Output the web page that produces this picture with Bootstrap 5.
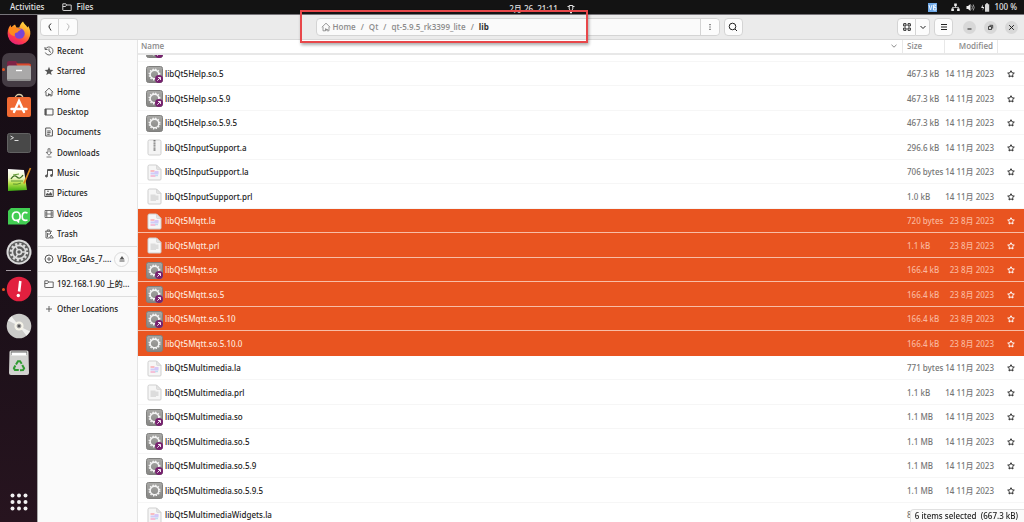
<!DOCTYPE html>
<html lang="en">
<head>
<meta charset="utf-8">
<meta name="viewport" content="width=device-width, initial-scale=1">
<title>Files</title>
<link href="https://cdn.jsdelivr.net/npm/bootstrap@5.3.0/dist/css/bootstrap.min.css" rel="stylesheet">
<style>
:root{--ink:#222;--accent:#e95420;--line:#d9d9d9}
body{font:500 8px/12px "Noto Sans","Noto Sans CJK SC",sans-serif;color:var(--ink);background:#fff}
svg{display:block;flex:none}
button{color:inherit;font:inherit}
a{color:inherit;text-decoration:none}
.defs{position:absolute;width:0;height:0}
.fill-rest{flex:1 1 0;min-width:0;min-height:0}
.i10{width:10px;height:10px}
.stroked{fill:none;stroke:currentColor;stroke-width:1}
/* top panel */
.panel{height:15px;background:#131313;color:#e4e4e4;border-bottom:1px solid #77757a}
.panel .side{flex:1 1 0}
.panel .activities{margin:0 18px 0 10px}
.panel .tray{gap:6px;padding-right:7px}
.panel .clock{padding:3px 0 0 68px}
/* dock */
.dock{width:38px;background:linear-gradient(#150c14,#1c1019 60%,#27141f);border-right:1px solid #aaa}
.dock li{height:36px}
.dock li:nth-child(even){height:37px}
.dock li.ruled{height:38px}
.dock li.ruled::before{content:"";position:absolute;top:0;left:6px;right:6px;height:1px;background:#a49aa2}
.dock a{width:34px;height:34px;border-radius:7px}
.dock a.current{background:#453c44}
.dock svg{width:26px;height:26px}
.dock .running{left:2px;width:3px;height:3px;border-radius:50%;background:var(--accent)}
.dock .apps{height:40px}
/* header bar */
.headbar{height:25px;background:#ebebeb;border-bottom:1px solid var(--line);padding:0 6px 0 2px}
.tool{height:18px;width:19px;padding:0;border:1px solid #d4d4d4;border-radius:4px;background:#fcfcfc;display:flex;align-items:center;justify-content:center}
.tool.thin{width:14px}
.tool.first{border-radius:4px 0 0 4px}
.tool.last{border-radius:0 4px 4px 0;border-left:0}
.tool.off{color:#b8b8b8}
.grow-a{flex:20 1 0}
.grow-b{flex:13 1 0}
.pathbar{height:18px;flex:0 1 404px;gap:5px;border:1px solid #d4d4d4;border-radius:4px;background:#fafafa;color:#8c8c8c;font-family:"Open Sans",sans-serif;font-weight:600}
.pathbar .tool{border-width:0 0 0 1px;height:16px;color:var(--ink);border-radius:0 4px 4px 0}
.pathbar .here{color:#2b2b2b;font-weight:700}
.pathbar .root{gap:2px}
.marker{left:-17px;top:-9px;width:288px;height:33px;z-index:5;border:2px solid #e8474a;box-shadow:1px 2px 3px #0005;pointer-events:none}
.window-keys{gap:8px;margin-left:10px}
.round{width:13px;height:13px;border:0;padding:0;border-radius:50%;background:#d8d8d8;display:flex;align-items:center;justify-content:center}
/* sidebar */
.places{width:100px;background:#fafafa;border-right:1px solid #e4e4e4;padding-top:1px}
.places ul{padding-bottom:2px}
.places li{height:20px}
.places li:nth-child(3n){height:21px}
.places .mount{height:25px;border-top:1px solid #dedede}
.places a{padding-left:6px;gap:3px;height:100%;white-space:nowrap}
.places svg{color:#555}
.eject{width:15px;height:15px;border:1px solid #dcdcdc;border-radius:50%;background:#fafafa;padding:0}
/* file list */
.files{width:100%;table-layout:fixed;border-collapse:separate;border-spacing:0}
.files th{position:sticky;top:0;z-index:1;height:15px;line-height:12px;padding:0 4px 1px;background:#fff;color:#8c8c8c;font-family:"Open Sans",sans-serif;font-weight:600;border-bottom:2px solid #e8e8e8;border-right:1px solid #e8e8e8}
.files th:first-child{padding-left:3px}
.files th:last-child{border-right:0}
.files td{padding:1px 4px 0;height:25px;line-height:12px;border-bottom:1px solid #f6f6f6;color:#757575;white-space:nowrap}
.files tr:nth-child(even) td{height:24px}
.files td:first-child{color:var(--ink);padding-left:8px}
.files td:last-child{color:#2e2e2e}
.files td.dt{padding-left:0}
.files tr.picked td{background:var(--accent);color:#f9b79d;border-bottom-color:#f8bda6}
.files tr.picked td:first-child{color:#fde6dc}
.files tr.picked td:last-child{color:#fff}
.files tr.lastpicked td{border-bottom-color:var(--accent)}
.files .entry{gap:2px}
.files svg.kind{width:17px;height:17px}
.c-size{width:42px}.c-date{width:53px}.c-star{width:26px}
.count{right:0;bottom:0;z-index:2;height:13px;padding:0 6px 0 4px;background:#fafafa;border:1px solid #e0e0e0;border-width:1px 0 0 1px;border-radius:4px 0 0 0}
</style>
</head>
<body class="vh-100 overflow-hidden d-flex flex-column">

<svg class="defs" aria-hidden="true">
 <linearGradient id="gGear" x2="0" y2="1"><stop stop-color="#a9a9a7"/><stop offset="1" stop-color="#858583"/></linearGradient>
 <symbol id="gear" viewBox="0 0 17 17"><rect x=".5" y=".5" width="16" height="16" rx="2" fill="url(#gGear)" stroke="#80807e"/><circle cx="8.500" cy="8.500" r="5.300" fill="none" stroke="#f4f4f4" stroke-width="1.400" stroke-dasharray="1.400 1.375"/><circle cx="8.500" cy="8.500" r="4.300" fill="none" stroke="#f4f4f4" stroke-width="1.400"/></symbol>
 <symbol id="link" viewBox="0 0 17 17"><use href="#gear"/><circle cx="13" cy="13" r="4" fill="#77216f"/><path d="M11.300 14.700l3-3m-2.300-.2h2.500v2.500" fill="none" stroke="#fff" stroke-width=".9"/></symbol>
 <symbol id="page" viewBox="0 0 17 17"><path d="M3.500 1h7L15 5.500V15a1 1 0 0 1-1 1H3a1 1 0 0 1-1-1V2.500A1.500 1.500 0 0 1 3.500 1z" fill="#f6f6f6" stroke="#cfcfcf"/><path d="M10.500 1v3.500a1 1 0 0 0 1 1H15z" fill="#e2e2e2" stroke="#cfcfcf" stroke-width=".6"/></symbol>
 <symbol id="text" viewBox="0 0 17 17"><use href="#page"/><path d="M4.500 6.500h5v1h3V12H10v1H4.500z" fill="#dcdcdc"/></symbol>
 <symbol id="code" viewBox="0 0 17 17"><use href="#page"/><path d="M4.500 7h4" stroke="#f8bcc1" stroke-width="2"/><path d="M8.500 8h4" stroke="#d9c6f6" stroke-width="2"/><path d="M4.500 9.500h8" stroke="#cfcbf8" stroke-width="2"/><path d="M4.500 12h5" stroke="#f4c0d8" stroke-width="2"/><path d="M9 11.500h3" stroke="#c1dcf0" stroke-width="1.500"/></symbol>
 <symbol id="arch" viewBox="0 0 17 17"><rect x="2" y="1" width="13" height="15" rx="1.500" fill="#f4f4f4" stroke="#cfcfcf"/><path d="M8.500 1v8" stroke="#777" stroke-width="2" stroke-dasharray="1 .6"/><rect x="7.500" y="9" width="2" height="3" fill="#999"/></symbol>
 <symbol id="star" viewBox="0 0 10 10"><path d="M5 1.700l1 2.100 2.300.3-1.700 1.600.4 2.300L5 6.900 3 8l.4-2.300L1.700 4.100l2.300-.3z" fill="none" stroke="currentColor" stroke-width="1"/></symbol>
 <symbol id="home" viewBox="0 0 10 10"><path d="M.8 5.300L5 1.200l4.200 4.100M2 4.800v4h2.500V6.500M8 4.800v4H6" fill="none" stroke="currentColor" stroke-width=".9"/><path d="M4.500 6.500l3 1-3 1.500" fill="currentColor"/></symbol>
 <symbol id="folder" viewBox="0 0 10 10"><path d="M.8 8V1.800h3l.8 1.200h4.600v5.500H1.300A.5.500 0 0 1 .8 8zM.8 4.500h2.700L4.600 3" fill="none" stroke="currentColor" stroke-width=".9"/></symbol>
</svg>

<header class="panel d-flex align-items-center flex-shrink-0">
 <div class="side d-flex align-items-center">
  <a href="#" class="activities">Activities</a>
  <a href="#" class="d-flex align-items-center gap-1"><svg class="i10"><use href="#folder"/></svg>Files</a>
 </div>
 <div class="clock d-flex align-items-center">
  <time>2月 26&nbsp; 21:11</time>
  <svg class="i10 ms-2 stroked" viewBox="0 0 10 10"><path d="M3.200 1.500h3.600V5L5.500 6.500V9h-1V6.500L3.200 5zM1.500 2.500h1.700M6.800 2.500h1.700"/></svg>
 </div>
 <div class="side tray d-flex align-items-center justify-content-end">
  <svg class="me-2" width="9" height="9" viewBox="0 0 9 9"><path fill="#6ea8e6" d="M0 0h9v9H0z"/><path d="M1 2l1.500 5L4 2m1.500 0v5m0-5H8L6 4.500h2V7H5.500" fill="none" stroke="#e8f3ff"/></svg>
  <svg width="9" height="9" viewBox="0 0 9 9" fill="#eee"><path d="M3.200.5h2.600v2.600H3.200zM.3 5.500h2.600V8H.3zm5.800 0h2.600V8H6.100z"/><path d="M4.500 3v1.500m-3 1.200V4.400h6v1.300" fill="none" stroke="#eee" stroke-width=".8"/></svg>
  <svg width="9" height="9" viewBox="0 0 9 9"><path d="M.5 3H2l2.500-2v7L2 6H.5z" fill="#eee"/><path d="M5.800 2.500q1.200 2 0 4M7.200 1.500q2 3 0 6" fill="none" stroke="#aaa" stroke-width=".9"/></svg>
  <span class="d-flex align-items-center gap-1"><svg width="9" height="9" viewBox="0 0 9 9"><path d="M1.500 1.500L.2 5H2L1.500 7.800 3.200 4H1.800z" fill="#eee"/><path d="M4 1.200h1V.3h2v.9h1.200v7.500H4z" fill="#d4d4d4"/></svg>100 %</span>
 </div>
</header>

<div class="d-flex fill-rest">
 <nav class="dock d-flex flex-column justify-content-between flex-shrink-0" aria-label="Dock">
  <ul class="list-unstyled m-0">
   <li class="position-relative d-flex align-items-center justify-content-center"><a href="#" aria-label="Firefox" class="d-flex align-items-center justify-content-center"><svg viewBox="0 0 26 26"><defs><linearGradient id="gf" x1=".8" y1="0" x2=".3" y2="1"><stop stop-color="#ffe548"/><stop offset=".4" stop-color="#ff9a29"/><stop offset=".75" stop-color="#ff3750"/><stop offset="1" stop-color="#e2207c"/></linearGradient></defs><path d="M17 1.500c1 3 3.500 3.500 4.500 6l.8-1.500c2 3.500 2.700 7 1.500 10.500A11.300 11.300 0 0 1 2 16.500C1 12 2 8 4.500 5l.8 2.500C7 5.500 8 5 9 4.500l1.500 3h2.800C14 5 15 3 17 1.500z" fill="url(#gf)"/><circle cx="13.500" cy="13.500" r="5.200" fill="#7a45d6"/><path d="M3 8c3-1.500 6-1 8 .5l4 .5c-1 2-3 1.800-3.500 3.500-2 0-3.500 1-2.500 3.500C4 16 2.500 12 3 8z" fill="#ff8a1e"/></svg></a></li>
   <li class="position-relative d-flex align-items-center justify-content-center"><span class="running position-absolute"></span><a href="#" aria-label="Files" class="current d-flex align-items-center justify-content-center"><svg viewBox="0 0 26 26"><path d="M1 6a2 2 0 0 1 2-2h7l2 2.500h11A2 2 0 0 1 25 8v5H1z" fill="#7e2346"/><path d="M10 6.500h13a2 2 0 0 1 2 2V13H14z" fill="#d84a2b"/><rect x="1" y="8.500" width="24" height="15.500" rx="2" fill="#aaa9a9"/><path d="M1 22a2 2 0 0 0 2 2h20a2 2 0 0 0 2-2" fill="#919090"/><path d="M10 13.500h6" stroke="#fff" stroke-width="1.400"/></svg></a></li>
   <li class="position-relative d-flex align-items-center justify-content-center"><a href="#" aria-label="Software" class="d-flex align-items-center justify-content-center"><svg viewBox="0 0 26 26"><path d="M9 6c0-6 8-6 8 0" fill="none" stroke="#d9cda9" stroke-width="1.300"/><rect x="1" y="4" width="24" height="20" rx="2" fill="#f06a33"/><path d="M8 19l5-11 5 11M5.500 16h15" fill="none" stroke="#fff" stroke-width="2.400" stroke-linecap="round"/></svg></a></li>
   <li class="position-relative d-flex align-items-center justify-content-center"><a href="#" aria-label="Terminal" class="d-flex align-items-center justify-content-center"><svg viewBox="0 0 26 26"><rect x="1.500" y="3.500" width="23" height="19" rx="2" fill="#484848" stroke="#626262"/><path d="M4.500 6l3 1.700-3 1.700M8.500 10.500h4" fill="none" stroke="#ddd"/></svg></a></li>
   <li class="position-relative d-flex align-items-center justify-content-center"><a href="#" aria-label="Notepad" class="d-flex align-items-center justify-content-center"><svg viewBox="0 0 26 26"><defs><linearGradient id="gn" x2="0" y2="1"><stop stop-color="#fff"/><stop offset=".4" stop-color="#eef7c8"/><stop offset=".65" stop-color="#b6e04a"/><stop offset="1" stop-color="#3fae12"/></linearGradient></defs><path d="M2 3l16 1 3 20-19 1z" fill="url(#gn)"/><path d="M5 13q3-5 6-2t6-2" fill="none" stroke="#3c6e20" stroke-width="1.300"/><path d="M5 15h12M7 9l6-1M7 18q4 1 8-1" fill="none" stroke="#5f9a32"/><path d="M24.500 2l-5.500 13-1 2.500" fill="none" stroke="#d98a1c" stroke-width="1.700"/></svg></a></li>
   <li class="position-relative d-flex align-items-center justify-content-center"><a href="#" aria-label="Qt Creator" class="d-flex align-items-center justify-content-center"><svg viewBox="0 0 26 26"><path d="M5 5h19v13l-4 3.500H2V8z" fill="#41cd52"/><path d="M10.500 9Q6.500 9 6.500 13.200t4 4.200 3.600-4.200T10.500 9zM11 17l2 2.500M21.500 10q-5-2-5.300 3.200t5.300 3.800" fill="none" stroke="#fff" stroke-width="1.700"/></svg></a></li>
   <li class="position-relative d-flex align-items-center justify-content-center"><a href="#" aria-label="Settings" class="d-flex align-items-center justify-content-center"><svg viewBox="0 0 26 26"><circle cx="13" cy="13" r="12.500" fill="#d9d9d9"/><circle cx="13" cy="13" r="10.500" fill="#5c5c5c"/><circle cx="13" cy="13" r="8" fill="none" stroke="#ddd" stroke-width="2.500" stroke-dasharray="2.200 1.990"/><circle cx="13" cy="13" r="6.600" fill="none" stroke="#ddd" stroke-width="1.600"/><circle cx="13" cy="13" r="2.500" fill="none" stroke="#ddd" stroke-width="1.500"/><path d="M15 13h4M12 11.300l-2-3.500M12 14.700l-2 3.500" stroke="#ddd" stroke-width="1.500"/></svg></a></li>
   <li class="ruled position-relative d-flex align-items-center justify-content-center"><span class="running position-absolute"></span><a href="#" aria-label="Problem report" class="d-flex align-items-center justify-content-center"><svg viewBox="0 0 26 26"><circle cx="13" cy="13" r="12.300" fill="#e2203f"/><path d="M14.300 5l-1.200 10.500" stroke="#fff" stroke-width="2.600"/><circle cx="12.300" cy="19.500" r="1.700" fill="#fff"/></svg></a></li>
   <li class="position-relative d-flex align-items-center justify-content-center"><a href="#" aria-label="Disc" class="d-flex align-items-center justify-content-center"><svg viewBox="0 0 26 26"><circle cx="13" cy="13" r="12.300" fill="#cbcbc9"/><path d="M13 13L2 7.500l3.500-4.300zM13 13l11 5.500-3.500 4.300z" fill="#f0f0ee"/><circle cx="13" cy="13" r="4.600" fill="#f5f3e8"/><circle cx="13" cy="13" r="2" fill="#555" stroke="#aaa"/></svg></a></li>
   <li class="position-relative d-flex align-items-center justify-content-center"><a href="#" aria-label="Trash" class="d-flex align-items-center justify-content-center"><svg viewBox="0 0 26 26"><path d="M3.500 2A1.500 1.500 0 0 1 5 .5h16A1.500 1.500 0 0 1 22.500 2L23 23a2 2 0 0 1-2 2H5a2 2 0 0 1-2-2z" fill="#d2d2d0"/><path d="M5 1.500h16V5H5z" fill="#666"/><path d="M5.500 2.500h15v3h-15z" fill="#fff"/><g fill="none" stroke="#2f9a30" stroke-width="2"><path id="arm" d="M10 14.500l2-3.300h2l1.700 2.600"/><use href="#arm" transform="rotate(120 13 16.500)"/><use href="#arm" transform="rotate(240 13 16.500)"/></g></svg></a></li>
  </ul>
  <a href="#" aria-label="Show applications" class="apps d-flex align-items-center justify-content-center mx-auto"><svg viewBox="0 0 26 26" fill="#f2f2f2"><g id="dots"><circle cx="6.500" cy="6.500" r="2"/><circle cx="13" cy="6.500" r="2"/><circle cx="19.500" cy="6.500" r="2"/></g><use href="#dots" y="6.500"/><use href="#dots" y="13"/></svg></a>
 </nav>

 <main class="d-flex flex-column fill-rest">
  <div class="headbar d-flex align-items-center flex-shrink-0">
   <button class="tool first" aria-label="Back"><svg class="i10 stroked" viewBox="0 0 10 10"><path d="M6 1.500Q3.500 4 4 5t2 3.500"/></svg></button>
   <button class="tool last off" aria-label="Forward"><svg class="i10 stroked" viewBox="0 0 10 10"><path d="M4 1.500Q6.500 4 6 5T4 8.500"/></svg></button>
   <div class="grow-a"></div>
   <div class="pathbar position-relative d-flex align-items-center ps-1">
    <a href="#" class="root d-flex align-items-center"><svg class="i10"><use href="#home"/></svg>Home</a><span>/</span><a href="#">Qt</a><span>/</span><a href="#">qt-5.9.5_rk3399_lite</a><span>/</span><a href="#" class="here">lib</a>
    <button class="tool ms-auto" aria-label="Menu"><svg class="i10" viewBox="0 0 10 10" fill="currentColor"><path d="M4.500 2h1v1.200h-1zm0 2.400h1v1.200h-1zm0 2.400h1V8h-1z"/></svg></button>
    <div class="marker position-absolute"></div>
   </div>
   <button class="tool ms-1" aria-label="Search"><svg class="i10 stroked" viewBox="0 0 10 10"><circle cx="4.500" cy="4.500" r="3.300"/><path d="M7 7l2 2"/></svg></button>
   <div class="grow-b"></div>
   <button class="tool first" aria-label="Grid view"><svg class="stroked" width="8" height="8" viewBox="0 0 8 8"><path d="M.7.7h2.300V3H.7zM5 .7h2.300V3H5zM.7 5h2.300v2.300H.7zM5 5h2.300v2.300H5z"/></svg></button>
   <button class="tool last thin" aria-label="View options"><svg class="stroked" width="8" height="8" viewBox="0 0 8 8"><path d="M1.500 3L4 5.500 6.500 3"/></svg></button>
   <button class="tool ms-1" aria-label="Main menu"><svg class="stroked" width="8" height="8" viewBox="0 0 8 8"><path d="M1 1.500h6M1 4h6M1 6.500h6"/></svg></button>
   <div class="window-keys d-flex">
    <button class="round" aria-label="Minimize"><svg class="stroked" width="7" height="7" viewBox="0 0 7 7"><path d="M1.500 5h4"/></svg></button>
    <button class="round" aria-label="Restore"><svg class="stroked" width="7" height="7" viewBox="0 0 7 7"><path d="M1.500 2.500h3v3h-3zM2.500 1.300h3.200v3.200" stroke-width=".8"/></svg></button>
    <button class="round" aria-label="Close"><svg class="stroked" width="7" height="7" viewBox="0 0 7 7"><path d="M1.200 1.200l4.600 4.600m0-4.600L1.200 5.800"/></svg></button>
   </div>
  </div>

  <div class="d-flex fill-rest">
   <nav class="places flex-shrink-0" aria-label="Places">
    <ul class="list-unstyled m-0">
     <li><a href="#" class="d-flex align-items-center"><svg class="i10 stroked" viewBox="0 0 10 10"><path d="M1.500 3A4 4 0 1 1 1.300 6.500M1 1v2.500h2.500M5 2.500V5l2 1.500" stroke-width=".9"/></svg>Recent</a></li>
     <li><a href="#" class="d-flex align-items-center"><svg class="i10" viewBox="0 0 10 10"><path d="M5 .8l1.200 3 3.200.2-2.500 2 .8 3.100L5 7.400 2.300 9.100 3.100 6 .6 4l3.200-.2z" fill="currentColor"/></svg>Starred</a></li>
     <li><a href="#" class="d-flex align-items-center"><svg class="i10"><use href="#home"/></svg>Home</a></li>
     <li><a href="#" class="d-flex align-items-center"><svg class="i10 stroked" viewBox="0 0 10 10"><path d="M1 2h8v6H1z"/><path d="M1.800 2v6" stroke-width="1.800"/></svg>Desktop</a></li>
     <li><a href="#" class="d-flex align-items-center"><svg class="i10 stroked" viewBox="0 0 10 10"><path d="M1.700 1h4.500l2.200 2.200V9H1.700zM3.200 4h3.500M3.200 5.700h3.500M3.200 7.300h2.500"/></svg>Documents</a></li>
     <li><a href="#" class="d-flex align-items-center"><svg class="i10 stroked" viewBox="0 0 10 10"><path d="M4 .8h2v3.500h1.800L5 7.300 2.200 4.300H4zM2.500 9h5" stroke-width=".8"/></svg>Downloads</a></li>
     <li><a href="#" class="d-flex align-items-center"><svg class="i10 stroked" viewBox="0 0 10 10"><path d="M3.500 7.500V1.500h5v5.500M3.500 2.500h5"/><circle cx="2.500" cy="8" r="1" fill="currentColor"/><circle cx="7.500" cy="7.500" r="1" fill="currentColor"/></svg>Music</a></li>
     <li><a href="#" class="d-flex align-items-center"><svg class="i10 stroked" viewBox="0 0 10 10"><path d="M.8 1.500h8.400v7H.8z"/><path d="M2 7.500V6l1.500-1 1.500 1 1.500-2L8 6v1.500z" fill="currentColor" stroke="none"/><circle cx="4" cy="3.300" r=".8" fill="currentColor" stroke="none"/></svg>Pictures</a></li>
     <li><a href="#" class="d-flex align-items-center"><svg class="i10 stroked" viewBox="0 0 10 10"><path d="M1 1.500h8v7H1zM2.800 1.500v7M7.200 1.500v7M2.800 5h4.400M1 4h1.800M1 6h1.800M7.200 4H9M7.200 6H9" stroke-width=".8"/></svg>Videos</a></li>
     <li><a href="#" class="d-flex align-items-center"><svg class="i10 stroked" viewBox="0 0 10 10"><path d="M1 2.300h7M3.200 2V1h2.600v1M2 3v6h3M3.500 4v4M5 4v2M6.500 3v2M5.500 9l1.700-3L9.300 9z" stroke-width=".9"/></svg>Trash</a></li>
    </ul>
    <div class="mount d-flex align-items-center justify-content-between pe-1"><a href="#" class="d-flex align-items-center"><svg class="i10 stroked" viewBox="0 0 10 10"><circle cx="5" cy="5" r="4"/><circle cx="5" cy="5" r="1.200"/></svg>VBox_GAs_7....</a>
     <button class="eject d-flex align-items-center justify-content-center flex-shrink-0 me-1" aria-label="Eject"><svg width="6" height="6" viewBox="0 0 6 6" fill="currentColor"><path d="M3 0l2.500 3.500h-5zM.5 4.500h5v1h-5z"/></svg></button></div>
    <div class="mount"><a href="#" class="d-flex align-items-center"><svg class="i10"><use href="#folder"/></svg>192.168.1.90 上的...</a></div>
    <div class="mount"><a href="#" class="d-flex align-items-center"><svg class="i10 stroked" viewBox="0 0 10 10"><path d="M5 2v6M2 5h6" stroke-width=".9"/></svg>Other Locations</a></div>
   </nav>

   <section class="fill-rest position-relative">
    <div id="scroller" class="h-100 overflow-hidden">
     <table class="files">
      <colgroup><col><col class="c-size"><col class="c-date"><col class="c-star"></colgroup>
      <thead><tr><th scope="col"><span class="d-flex justify-content-between align-items-center">Name<svg class="stroked" width="8" height="8" viewBox="0 0 8 8"><path d="M1.500 2.800L4 5.200l2.500-2.400"/></svg></span></th><th scope="col">Size</th><th scope="col" class="text-end">Modified</th><th scope="col"></th></tr></thead>
      <tbody id="rows"></tbody>
     </table>
    </div>
    <div class="count position-absolute">6 items selected&nbsp; (667.3 kB)</div>
   </section>
  </div>
 </main>
</div>

<script>
const nov = "14 11月 2023", aug = "23 8月 2023";
// icon, name, size, modified, selected
const files = [
 ["link","libQt5Help.so","467.3 kB",nov],
 ["link","libQt5Help.so.5","467.3 kB",nov],
 ["link","libQt5Help.so.5.9","467.3 kB",nov],
 ["gear","libQt5Help.so.5.9.5","467.3 kB",nov],
 ["arch","libQt5InputSupport.a","296.6 kB",nov],
 ["code","libQt5InputSupport.la","706 bytes",nov],
 ["text","libQt5InputSupport.prl","1.0 kB",nov],
 ["code","libQt5Mqtt.la","720 bytes",aug,1],
 ["text","libQt5Mqtt.prl","1.1 kB",aug,1],
 ["link","libQt5Mqtt.so","166.4 kB",aug,1],
 ["link","libQt5Mqtt.so.5","166.4 kB",aug,1],
 ["link","libQt5Mqtt.so.5.10","166.4 kB",aug,1],
 ["gear","libQt5Mqtt.so.5.10.0","166.4 kB",aug,1],
 ["code","libQt5Multimedia.la","771 bytes",nov],
 ["text","libQt5Multimedia.prl","1.1 kB",nov],
 ["link","libQt5Multimedia.so","1.1 MB",nov],
 ["link","libQt5Multimedia.so.5","1.1 MB",nov],
 ["link","libQt5Multimedia.so.5.9","1.1 MB",nov],
 ["gear","libQt5Multimedia.so.5.9.5","1.1 MB",nov],
 ["code","libQt5MultimediaWidgets.la","890 bytes",nov]
];
document.getElementById("rows").innerHTML = files.map(([icon,name,size,date,on],i) => {
  const cls = on ? (files[i+1][4] ? "picked" : "picked lastpicked") : "";
  return `<tr class="${cls}"><td><span class="entry d-flex align-items-center"><svg class="kind"><use href="#${icon}"/></svg>${name}</span></td><td>${size}</td><td class="dt text-end">${date}</td><td><svg class="i10 mx-auto"><use href="#star"/></svg></td></tr>`;
}).join("");
document.getElementById("scroller").scrollTop = 18;
</script>
<script src="https://cdn.jsdelivr.net/npm/bootstrap@5.3.0/dist/js/bootstrap.bundle.min.js"></script>
</body>
</html>
